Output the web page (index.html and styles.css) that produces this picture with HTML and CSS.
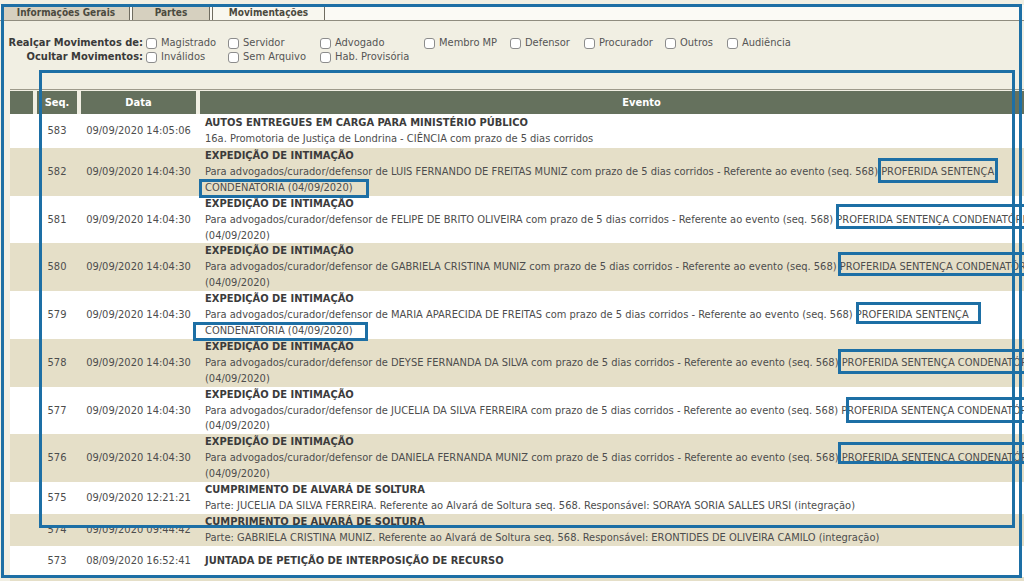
FILE: index.html
```html
<!DOCTYPE html>
<html lang="pt-BR">
<head>
<meta charset="utf-8">
<title>Movimentações</title>
<link rel="stylesheet" href="styles.css">
</head>
<body>
<div class="tabs">
  <div class="tab tab-info">Informações Gerais</div>
  <div class="tab tab-partes">Partes</div>
  <div class="tab tab-mov active">Movimentações</div>
</div>
<div class="panel">
  <div class="filters">
    <div class="flabel">Realçar Movimentos de:</div>
    <label class="opt"><span class="cb"></span>Magistrado</label>
    <label class="opt"><span class="cb"></span>Servidor</label>
    <label class="opt"><span class="cb"></span>Advogado</label>
    <label class="opt"><span class="cb"></span>Membro MP</label>
    <label class="opt"><span class="cb"></span>Defensor</label>
    <label class="opt"><span class="cb"></span>Procurador</label>
    <label class="opt"><span class="cb"></span>Outros</label>
    <label class="opt"><span class="cb"></span>Audiência</label>
    <div class="flabel">Ocultar Movimentos:</div>
    <label class="opt"><span class="cb"></span>Inválidos</label>
    <label class="opt"><span class="cb"></span>Sem Arquivo</label>
    <label class="opt"><span class="cb"></span>Hab. Provisória</label>
  </div>
  <table class="movs">
    <colgroup>
      <col class="col0"><col class="col1"><col class="col2"><col class="col3">
    </colgroup>
    <thead>
      <tr><th class="h0"></th><th class="h1">Seq.</th><th class="h2">Data</th><th class="h3">Evento</th></tr>
    </thead>
    <tbody>
      <tr class="w first"><td></td><td class="seq">583</td><td class="dt">09/09/2020 14:05:06</td><td class="ev"><span class="t">AUTOS ENTREGUES EM CARGA PARA MINISTÉRIO PÚBLICO</span><br>16a. Promotoria de Justiça de Londrina - CIÊNCIA com prazo de 5 dias corridos</td></tr>
      <tr class="b"><td></td><td class="seq">582</td><td class="dt">09/09/2020 14:04:30</td><td class="ev"><span class="t">EXPEDIÇÃO DE INTIMAÇÃO</span><br>Para advogados/curador/defensor de LUIS FERNANDO DE FREITAS MUNIZ com prazo de 5 dias corridos - Referente ao evento (seq. 568) PROFERIDA SENTENÇA<br>CONDENATÓRIA (04/09/2020)</td></tr>
      <tr class="w"><td></td><td class="seq">581</td><td class="dt">09/09/2020 14:04:30</td><td class="ev"><span class="t">EXPEDIÇÃO DE INTIMAÇÃO</span><br>Para advogados/curador/defensor de FELIPE DE BRITO OLIVEIRA com prazo de 5 dias corridos - Referente ao evento (seq. 568) PROFERIDA SENTENÇA CONDENATÓRIA<br>(04/09/2020)</td></tr>
      <tr class="b"><td></td><td class="seq">580</td><td class="dt">09/09/2020 14:04:30</td><td class="ev"><span class="t">EXPEDIÇÃO DE INTIMAÇÃO</span><br>Para advogados/curador/defensor de GABRIELA CRISTINA MUNIZ com prazo de 5 dias corridos - Referente ao evento (seq. 568) PROFERIDA SENTENÇA CONDENATÓRIA<br>(04/09/2020)</td></tr>
      <tr class="w"><td></td><td class="seq">579</td><td class="dt">09/09/2020 14:04:30</td><td class="ev"><span class="t">EXPEDIÇÃO DE INTIMAÇÃO</span><br>Para advogados/curador/defensor de MARIA APARECIDA DE FREITAS com prazo de 5 dias corridos - Referente ao evento (seq. 568) PROFERIDA SENTENÇA<br>CONDENATÓRIA (04/09/2020)</td></tr>
      <tr class="b"><td></td><td class="seq">578</td><td class="dt">09/09/2020 14:04:30</td><td class="ev"><span class="t">EXPEDIÇÃO DE INTIMAÇÃO</span><br>Para advogados/curador/defensor de DEYSE FERNANDA DA SILVA com prazo de 5 dias corridos - Referente ao evento (seq. 568) PROFERIDA SENTENÇA CONDENATÓRIA<br>(04/09/2020)</td></tr>
      <tr class="w"><td></td><td class="seq">577</td><td class="dt">09/09/2020 14:04:30</td><td class="ev"><span class="t">EXPEDIÇÃO DE INTIMAÇÃO</span><br>Para advogados/curador/defensor de JUCELIA DA SILVA FERREIRA com prazo de 5 dias corridos - Referente ao evento (seq. 568) PROFERIDA SENTENÇA CONDENATÓRIA<br>(04/09/2020)</td></tr>
      <tr class="b"><td></td><td class="seq">576</td><td class="dt">09/09/2020 14:04:30</td><td class="ev"><span class="t">EXPEDIÇÃO DE INTIMAÇÃO</span><br>Para advogados/curador/defensor de DANIELA FERNANDA MUNIZ com prazo de 5 dias corridos - Referente ao evento (seq. 568) <span class="u">PROFERIDA SENTENÇA CONDENATÓRIA</span><br>(04/09/2020)</td></tr>
      <tr class="w"><td></td><td class="seq">575</td><td class="dt">09/09/2020 12:21:21</td><td class="ev"><span class="t">CUMPRIMENTO DE ALVARÁ DE SOLTURA</span><br>Parte: JUCELIA DA SILVA FERREIRA. Referente ao Alvará de Soltura seq. 568. Responsável: SORAYA SORIA SALLES URSI (integração)</td></tr>
      <tr class="b"><td></td><td class="seq">574</td><td class="dt">09/09/2020 09:44:42</td><td class="ev"><span class="t">CUMPRIMENTO DE ALVARÁ DE SOLTURA</span><br>Parte: GABRIELA CRISTINA MUNIZ. Referente ao Alvará de Soltura seq. 568. Responsável: ERONTIDES DE OLIVEIRA CAMILO (integração)</td></tr>
      <tr class="w tall"><td></td><td class="seq">573</td><td class="dt">08/09/2020 16:52:41</td><td class="ev"><span class="t">JUNTADA DE PETIÇÃO DE INTERPOSIÇÃO DE RECURSO</span></td></tr>
      <tr class="b last"><td></td><td class="seq">572</td><td class="dt">08/09/2020 16:50:12</td><td class="ev"><span class="t">JUNTADA DE PETIÇÃO DE RECURSO</span><br>Petição juntada ao processo</td></tr>
    </tbody>
  </table>
</div>
<div class="mark outer"></div>
<div class="mark inner"></div>
<div class="mark m1"></div>
<div class="mark m2"></div>
<div class="mark m3"></div>
<div class="mark m4"></div>
<div class="mark m5"></div>
<div class="mark m6"></div>
<div class="mark m7"></div>
<div class="mark m8"></div>
<div class="mark m9"></div>
</body>
</html>
```

FILE: styles.css
```css
html, body {
  margin: 0;
  padding: 0;
  overflow: hidden;
  height: 100%;
}
body {
  position: relative;
  background: #f1efe3;
  font-family: "DejaVu Sans Condensed", "DejaVu Sans", Verdana, sans-serif;
  font-size: 11px;
  color: #4a4a4a;
}

/* tabs */
.tabs {
  display: flex;
  gap: 2px;
  margin: 5px 0 0 0;
  padding-left: 2px;
  height: 15px;
  background: #fbfaf5;
  border-bottom: 1px solid #8f8c7f;
}
.tab {
  box-sizing: border-box;
  height: 15px;
  border: 1px solid #6f6c60;
  border-bottom: none;
  background: #d6d0bf;
  color: #4b4a3e;
  font-size: 10px;
  font-weight: bold;
  text-align: center;
  line-height: 14px;
}
.tab-info { width: 128px; }
.tab-partes { width: 78px; }
.tab-mov { width: 113px; }
.tab.active { background: #f8f7ef; }

/* filters */
.panel {
  padding-top: 15px;
}
.filters {
  display: grid;
  grid-template-columns: 146px 82px 92px 104px 86px 74px 81px 62px max-content;
  line-height: 14px;
}
.flabel {
  text-align: right;
  padding-right: 3px;
  font-weight: bold;
  color: #3a3a3a;
}
.opt {
  display: flex;
  align-items: center;
  gap: 4px;
  color: #555;
}
.cb {
  box-sizing: border-box;
  width: 11px;
  height: 11px;
  border: 1px solid #8c8c8c;
  border-radius: 3px;
  background: #fff;
}

/* table */
.movs {
  margin: 25px 0 0 10px;
  width: 1073px;
  table-layout: fixed;
  border-collapse: separate;
  border-spacing: 0;
  border-top: 1px solid #9d9a8b;
}
.col0 { width: 25px; }
.col1 { width: 44px; }
.col2 { width: 119px; }
.col3 { width: 885px; }

.movs th {
  height: 24px;
  padding: 0;
  background: #65715d;
  color: #fff;
  font-weight: bold;
  text-align: center;
  border-top: 1px solid #f1efe3;
  box-sizing: border-box;
}
.h0 { border-right: 2px solid #f1efe3; }
.h1, .h2 { border-left: 2px solid #f1efe3; border-right: 2px solid #f1efe3; }
.h3 { border-left: 2px solid #f1efe3; }

.movs td {
  padding: 0;
  line-height: 15.9px;
  vertical-align: middle;
  color: #4d4d4d;
}
.movs tr.w td { background: #ffffff; }
.movs tr.b td { background: #e5dfc8; }
.movs tr.first td { height: 34px; }
.movs tr.tall td { height: 31px; }
.movs tr.last td { padding-top: 5px; }
.seq { text-align: center; }
.dt { text-align: center; }
.ev {
  padding-left: 7px !important;
  white-space: nowrap;
  overflow: hidden;
}
.t {
  font-weight: bold;
  color: #3b3b3b;
}
.u { text-decoration: underline; }

/* annotation boxes drawn over the screenshot */
.mark {
  position: absolute;
  box-sizing: border-box;
  border: 3px solid #1d6fa5;
  pointer-events: none;
}
.outer { left: 1px; top: 4px; width: 1021px; height: 574px; }
.inner { left: 39px; top: 70px; width: 976px; height: 458px; }
.m1 { left: 878px; top: 158px; width: 120px; height: 25px; }
.m2 { left: 199px; top: 179px; width: 170px; height: 19px; }
.m3 { left: 836px; top: 204px; width: 200px; height: 25px; }
.m4 { left: 838px; top: 252px; width: 200px; height: 24px; }
.m5 { left: 856px; top: 302px; width: 125px; height: 22px; }
.m6 { left: 193px; top: 322px; width: 175px; height: 19px; }
.m7 { left: 838px; top: 349px; width: 200px; height: 25px; }
.m8 { left: 846px; top: 397px; width: 200px; height: 26px; }
.m9 { left: 838px; top: 442px; width: 200px; height: 22px; }
```
